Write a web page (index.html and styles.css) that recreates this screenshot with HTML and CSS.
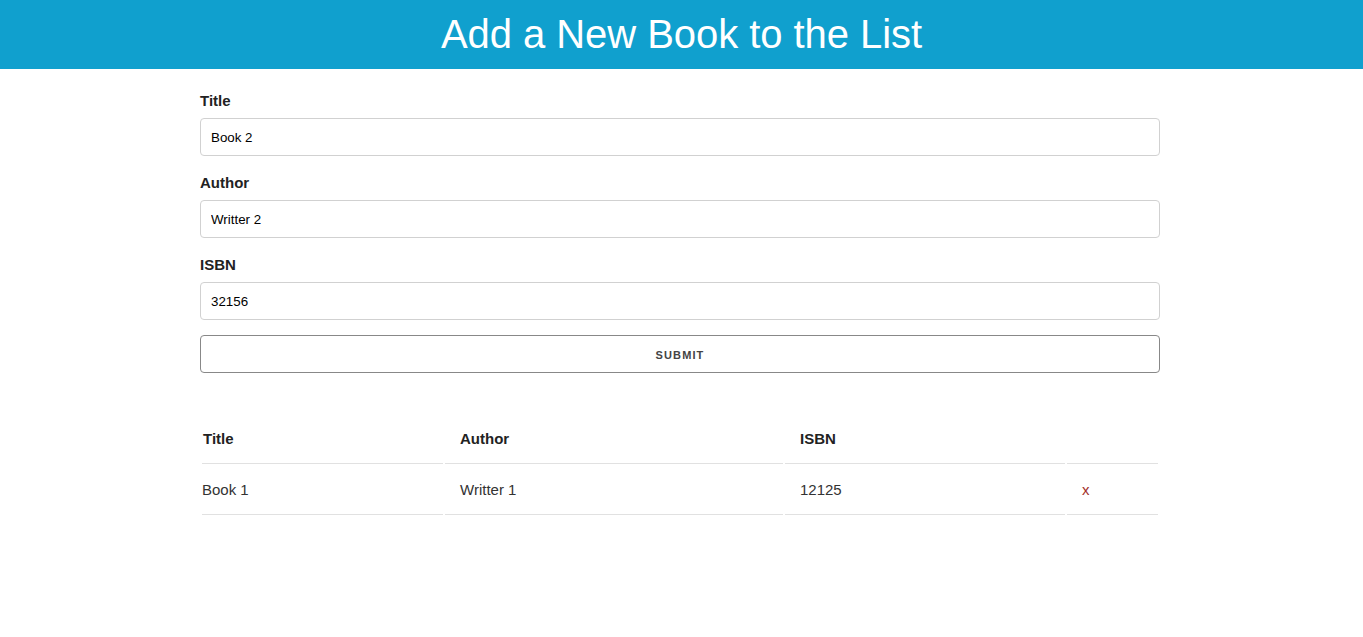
FILE: index.html
```html
<!DOCTYPE html>
<html lang="en">
<head>
<meta charset="utf-8">
<title>Book List</title>
<link rel="stylesheet" href="styles.css">
</head>
<body>
<header class="banner">
  <h1 class="banner-title">Add a New Book to the List</h1>
</header>
<main class="container">
  <form class="book-form">
    <label class="field-label" for="title">Title</label>
    <input class="field-input" id="title" type="text" value="Book 2">
    <label class="field-label" for="author">Author</label>
    <input class="field-input" id="author" type="text" value="Writter 2">
    <label class="field-label" for="isbn">ISBN</label>
    <input class="field-input" id="isbn" type="text" value="32156">
    <button class="submit-btn" type="button">Submit</button>
  </form>
  <table class="book-table">
    <colgroup>
      <col class="col-title">
      <col class="col-author">
      <col class="col-isbn">
      <col>
    </colgroup>
    <thead>
      <tr>
        <th class="first">Title</th>
        <th>Author</th>
        <th>ISBN</th>
        <th></th>
      </tr>
    </thead>
    <tbody>
      <tr>
        <td class="first">Book 1</td>
        <td>Writter 1</td>
        <td>12125</td>
        <td><a class="delete" href="#">x</a></td>
      </tr>
    </tbody>
  </table>
</main>
</body>
</html>
```

FILE: styles.css
```css
html, body {
  margin: 0;
  padding: 0;
}
body {
  font-family: "Liberation Sans", Arial, sans-serif;
  font-size: 15px;
  line-height: 1.6;
  color: #222;
  background: #fff;
}
.banner {
  background: #10a0ce;
  padding: 10px 0 11px;
}
.banner-title {
  margin: 0;
  font-size: 40px;
  line-height: 48px;
  font-weight: normal;
  letter-spacing: -0.05px;
  color: #fff;
  text-align: center;
}
.container {
  width: 960px;
  margin: 0 auto;
  padding: 20px 3px 0 0;
}
.book-form {
  display: flex;
  flex-direction: column;
}
.field-label {
  display: block;
  font-weight: bold;
  line-height: 24px;
  margin-bottom: 5px;
}
.field-input {
  height: 38px;
  box-sizing: border-box;
  padding: 6px 10px;
  border: 1px solid #d1d1d1;
  border-radius: 4px;
  font-family: "Liberation Sans", Arial, sans-serif;
  font-size: 13.33px;
  color: #000;
  margin: 0 0 15px;
  background: #fff;
}
.submit-btn {
  height: 38px;
  line-height: 38px;
  box-sizing: border-box;
  border: 1px solid #888;
  border-radius: 4px;
  background: transparent;
  color: #444;
  font-family: "Liberation Sans", Arial, sans-serif;
  font-size: 11px;
  font-weight: bold;
  letter-spacing: 1.1px;
  text-transform: uppercase;
  margin: 0 0 40px;
  padding: 0 30px;
}
.book-table {
  width: 960px;
  border-spacing: 2px;
  table-layout: fixed;
}
.col-title { width: 241px; }
.col-author { width: 338px; }
.col-isbn { width: 280px; }
.book-table th,
.book-table td {
  padding: 12px 15px;
  text-align: left;
  border-bottom: 1px solid #e1e1e1;
  line-height: 24px;
}
.book-table th {
  font-weight: bold;
  color: #222;
}
.book-table td {
  color: #333;
}
.book-table th.first {
  padding-left: 1px;
}
.book-table td.first {
  padding-left: 0;
}
.delete {
  color: #a3302a;
  text-decoration: none;
}
```
